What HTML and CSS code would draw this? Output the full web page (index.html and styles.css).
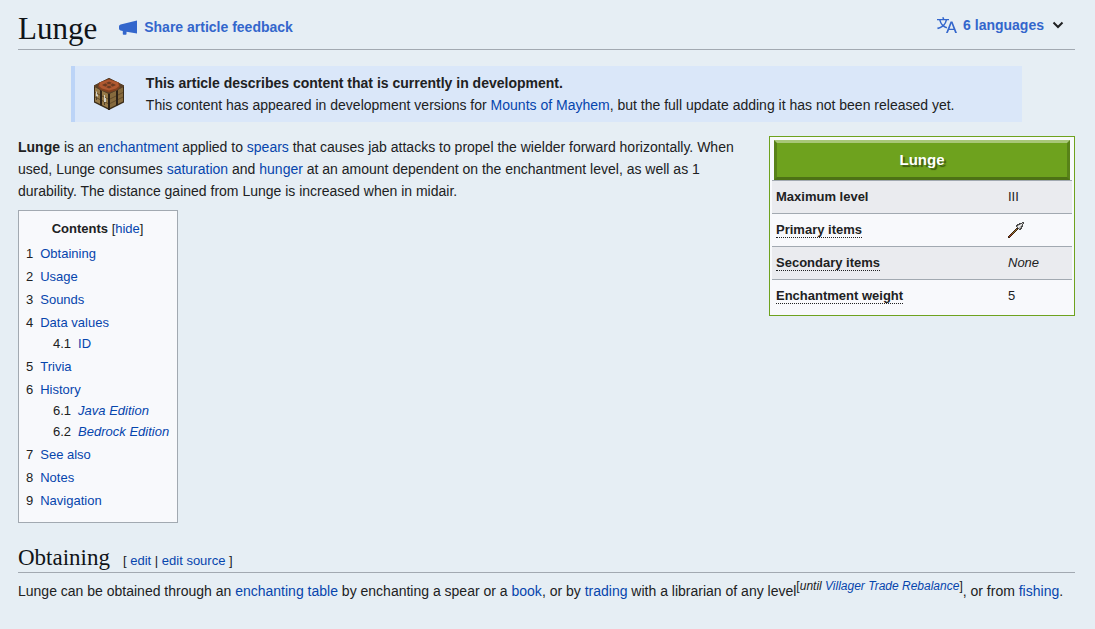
FILE: index.html
```html
<!DOCTYPE html>
<html lang="en">
<head>
  <meta charset="UTF-8" />
  <meta name="viewport" content="width=device-width, initial-scale=1" />
  <title>Lunge</title>
  <link rel="stylesheet" href="styles.css">
</head>
<body>
  <header class="page-header">
    <h1>Lunge</h1>
    <a href="#" class="feedback">
      <svg width="20" height="20" viewBox="0 0 20 20" aria-hidden="true">
        <path fill="currentColor" d="M19 3.500v13L8.500 14.700V17a.8.8 0 0 1-.8.8H5.600a.8.8 0 0 1-.8-.8v-3L2.600 13.600A2 2 0 0 1 1 11.600V9.400a2 2 0 0 1 1.600-2z" />
      </svg>
      Share article feedback
    </a>
    <button type="button" class="languages">
      <svg width="20" height="20" viewBox="0 0 20 20" aria-hidden="true">
        <path fill="currentColor" d="M20 18h-1.440a.6.6 0 0 1-.4-.12.8.8 0 0 1-.23-.31L17 15h-5l-1 2.540a.8.8 0 0 1-.22.3.6.6 0 0 1-.4.14H9l4.550-11.470h1.890zm-3.530-4.310L14.890 9.500a12 12 0 0 1-.39-1.240q-.09.37-.19.690l-.19.560-1.580 4.190zm-6.300-1.580a13.400 13.400 0 0 1-2.910-1.410 11.460 11.460 0 0 0 2.810-5.370H12V4H7.310a4 4 0 0 0-.2-.56C6.870 2.790 6.600 2 6.600 2l-1.470.5s.4.890.6 1.500H0v1.330h2.150A11.200 11.200 0 0 0 5 10.700a17.200 17.200 0 0 1-5 2.100q.56.82.87 1.380a23.300 23.300 0 0 0 5.220-2.510 15.600 15.600 0 0 0 3.560 1.770zM3.630 5.330h4.910a8.100 8.100 0 0 1-2.450 4.450 9.100 9.100 0 0 1-2.460-4.450" />
      </svg>
      6 languages
      <svg class="chevron" width="12" height="12" viewBox="0 0 12 12" aria-hidden="true">
        <path fill="none" stroke="currentColor" stroke-width="2" d="M1.500 3.500 6 8l4.500-4.500" />
      </svg>
    </button>
  </header>

  <main>
    <aside class="notice">
      <svg class="notice-icon" width="32" height="34" viewBox="0 0 32 34" aria-hidden="true">
        <!-- faces -->
        <path fill="#3a2c1a" d="M16 1 31 8.500v17L16 33 1 25.500v-17z" />
        <path fill="#977a49" d="M2 10l13 6.500v14.500L2 24.500z" />
        <path fill="#866a3d" d="M17 16.500 30 10v14.500L17 31z" />
        <path stroke="#644c2a" fill="none" d="M2 15.500 15 22M2 20l13 6.500M17 22l13-6.500M17 26.500 30 20" />
        <path fill="#2e2318" d="M15 15h2v18h-2zM7 12.500l2 1V29l-2-1zM23 13.500l2-1V28l-2 1z" />
        <!-- table top -->
        <path fill="#5b4128" d="M16 1 31 8.500v1L25 13l-9 4-9-4-6-3.500v-1z" />
        <path fill="#82401f" d="M16 2 26 5.500 27 10l-3 3-8 2.500L8 13l-3-3 1-4.500z" />
        <path fill="#b05830" d="M16 2.500 25 5.500 26 9l-3 2.500-7 2-7-2L6 9l1-3.500z" />
        <path fill="#6b3b22" d="M16 4.500 23 8l-7 3.500L9 8z" />
        <path stroke="#b05830" fill="none" d="m12.500 6.200 7 3.600M19.500 6.200l-7 3.600" />
        <!-- tools -->
        <path fill="#d3cfc4" d="M3 14.500h1v3h1v2H3zM11 18h1v3h1v4h-2z" />
        <path fill="#54422c" d="M3 19.500h1V23H3zM11 25h1v3h-1z" />
      </svg>
      <div>
        <strong>This article describes content that is currently in development.</strong><br>
        This content has appeared in development versions for <a href="#">Mounts of Mayhem</a>, but the full update adding it has not been released yet.
      </div>
    </aside>

    <div class="intro">
      <div class="intro-text">
        <p><b>Lunge</b> is an <a href="#">enchantment</a> applied to <a href="#">spears</a> that causes jab attacks to propel the wielder forward horizontally. When used, Lunge consumes <a href="#">saturation</a> and <a href="#">hunger</a> at an amount dependent on the enchantment level, as well as 1 durability. The distance gained from Lunge is increased when in midair.</p>

        <nav class="toc">
          <div class="toc-title"><b>Contents</b> [<a href="#">hide</a>]</div>
          <ul>
            <li><span>1</span><a href="#obtaining">Obtaining</a></li>
            <li><span>2</span><a href="#">Usage</a></li>
            <li><span>3</span><a href="#">Sounds</a></li>
            <li><span>4</span><a href="#">Data values</a>
              <ul>
                <li><span>4.1</span><a href="#">ID</a></li>
              </ul>
            </li>
            <li><span>5</span><a href="#">Trivia</a></li>
            <li><span>6</span><a href="#">History</a>
              <ul>
                <li><span>6.1</span><a href="#"><i>Java Edition</i></a></li>
                <li><span>6.2</span><a href="#"><i>Bedrock Edition</i></a></li>
              </ul>
            </li>
            <li><span>7</span><a href="#">See also</a></li>
            <li><span>8</span><a href="#">Notes</a></li>
            <li><span>9</span><a href="#">Navigation</a></li>
          </ul>
        </nav>
      </div>

      <div class="infobox">
        <div class="infobox-title">Lunge</div>
        <table>
          <tr>
            <th scope="row">Maximum level</th>
            <td>III</td>
          </tr>
          <tr>
            <th scope="row"><abbr>Primary items</abbr></th>
            <td>
              <a href="#" aria-label="Spear"><svg width="16" height="16" viewBox="0 0 16 16" shape-rendering="crispEdges" aria-hidden="true">
                <!-- shaft -->
                <path fill="#3a2614" d="M8 6h2v2H9v1H8v1H7v1H6v1H5v1H4v1H3v1H2v1H0v-2h1v-1h1v-1h1v-1h1v-1h1V9h1V8h1V7h1z" />
                <path fill="#9a7430" d="M8 7h1v1H8zM7 8h1v1H7zM6 9h1v1H6zM5 10h1v1H5zM4 11h1v1H4z" />
                <path fill="#a9401f" d="M3 12h1v1H3zM2 13h1v1H2zM1 14h1v1H1z" />
                <!-- head -->
                <path fill="#4a4a4a" d="M14 0h2v2h-1v3h-1v2h-1v1h-2V7h-1V6H9V5H8V3h1V2h2V1h3z" />
                <path fill="#b4b4b4" d="M14 1h1v1h-1v2h-1v2h-1v1h-1V6h-1V5H9V4h1V3h2V2h2z" />
                <path fill="#ececec" d="M13 2h1v1h-1v1h-1v1h-1v1h-1V4h1V3h2z" />
              </svg></a>
            </td>
          </tr>
          <tr>
            <th scope="row"><abbr>Secondary items</abbr></th>
            <td><i>None</i></td>
          </tr>
          <tr>
            <th scope="row"><abbr>Enchantment weight</abbr></th>
            <td>5</td>
          </tr>
        </table>
      </div>
    </div>

    <section>
      <div class="section-heading">
        <h2 id="obtaining">Obtaining</h2>
        <span class="edit-links">[ <a href="#">edit</a> | <a href="#">edit source</a> ]</span>
      </div>
      <p>Lunge can be obtained through an <a href="#">enchanting table</a> by enchanting a spear or a <a href="#">book</a>, or by <a href="#">trading</a> with a librarian of any level<sup>[<i>until <a href="#">Villager Trade Rebalance</a></i>]</sup>, or from <a href="#">fishing</a>.</p>
    </section>
  </main>
</body>
</html>
```

FILE: styles.css
```css
:root {
  --bg-color: #e6eef4;
  --text-color: #202122;
  --link-color: #0645ad;
  --accent-color: #3366cc;
  --border-color: #a2a9b1;
  --box-bg: #f8f9fc;
  --green: #6ea21e;
}

* {
  box-sizing: border-box;
}

body {
  margin: 0;
  padding: 8px 20px 24px 18px;
  background-color: var(--bg-color);
  color: var(--text-color);
  font-family: "Liberation Sans", Arial, sans-serif;
  font-size: 14px;
  line-height: 22px;
}

a {
  color: var(--link-color);
  text-decoration: none;
}

a:hover {
  text-decoration: underline;
}

p {
  margin: 0;
}

h1,
h2 {
  margin: 0;
  color: #101418;
  font-family: "Liberation Serif", Georgia, serif;
  font-weight: normal;
}

.page-header {
  display: flex;
  align-items: center;
  border-bottom: 1px solid var(--border-color);
}

h1 {
  font-size: 31px;
  line-height: 41px;
}

.feedback,
.languages {
  display: flex;
  align-items: center;
  gap: 6px;
  color: var(--accent-color);
  font-weight: bold;
}

.feedback {
  margin-left: 21px;
  padding-bottom: 4px;
}

.languages {
  margin-left: auto;
  padding: 0 11px 8px 0;
  border: none;
  background: none;
  font-family: inherit;
  font-size: 14px;
  line-height: 22px;
  cursor: pointer;
}

.chevron {
  margin-left: 2px;
  color: var(--text-color);
}

/* Development notice */
.notice {
  display: flex;
  align-items: center;
  gap: 21px;
  width: 90%;
  margin: 16px auto 14px;
  padding: 6px 18px;
  border-left: 4px solid #bcd4f7;
  background-color: #dae7f9;
}

.notice-icon {
  flex: none;
}

.intro {
  display: flex;
  align-items: flex-start;
  gap: 20px;
}

.intro-text {
  flex: 1;
}

/* Infobox */
.infobox {
  flex: none;
  width: 306px;
  padding: 3px 2px;
  border: 1px solid var(--green);
  background-color: var(--box-bg);
  font-size: 13px;
}

.infobox-title {
  margin: 0 2px;
  border: 3px solid;
  border-color: #a8c778 #588218 #4d7215 #588218;
  background-color: var(--green);
  color: #fff;
  font-size: 15px;
  font-weight: bold;
  line-height: 34px;
  text-align: center;
  text-shadow: 2px 2px 1px #3e5c11;
}

.infobox table {
  width: 100%;
  border-collapse: separate;
  border-spacing: 0;
}

.infobox th,
.infobox td {
  height: 33px;
  padding: 0 4px;
  border-top: 1px solid var(--border-color);
  text-align: left;
}

.infobox th {
  width: 232px;
}

.infobox tr:nth-child(odd) {
  background-color: #eaebef;
}

.infobox svg {
  display: block;
}

abbr {
  border-bottom: 1px dotted var(--text-color);
}

/* Table of contents */
.toc {
  display: table;
  margin-top: 8px;
  padding: 7px 8px 11px 7px;
  border: 1px solid var(--border-color);
  background-color: var(--box-bg);
  font-size: 13px;
}

.toc-title {
  margin-bottom: 3px;
  text-align: center;
}

.toc ul {
  margin: 0;
  padding: 0;
  list-style: none;
  line-height: 21px;
}

.toc > ul > li + li {
  margin-top: 2px;
}

.toc ul ul {
  padding-left: 27px;
}

.toc span {
  margin-right: 7px;
}

/* Sections */
.section-heading {
  display: flex;
  align-items: baseline;
  gap: 13px;
  margin: 20px 0 7px;
  border-bottom: 1px solid var(--border-color);
}

h2 {
  font-size: 23px;
  line-height: 29px;
}

.edit-links {
  font-size: 13px;
}

sup {
  font-size: 12px;
  line-height: 1;
}
```
